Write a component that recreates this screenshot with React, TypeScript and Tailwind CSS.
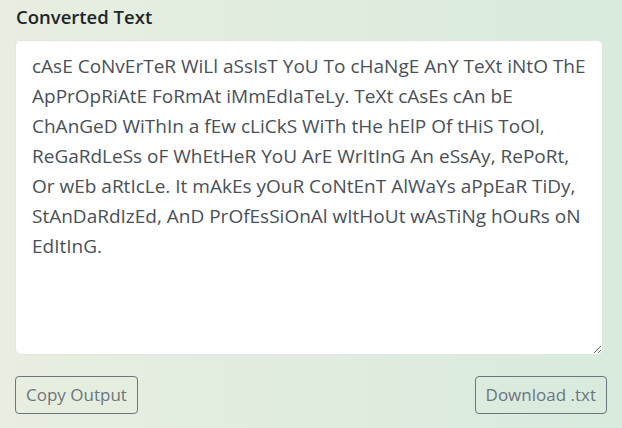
const output =
  'cAsE CoNvErTeR WiLl aSsIsT YoU To cHaNgE AnY TeXt iNtO ThE ApPrOpRiAtE FoRmAt iMmEdIaTeLy. TeXt cAsEs cAn bE ChAnGeD WiThIn a fEw cLiCkS WiTh tHe hElP Of tHiS ToOl, ReGaRdLeSs oF WhEtHeR YoU ArE WrItInG An eSsAy, RePoRt, Or wEb aRtIcLe. It mAkEs yOuR CoNtEnT AlWaYs aPpEaR TiDy, StAnDaRdIzEd, AnD PrOfEsSiOnAl wItHoUt wAsTiNg hOuRs oN EdItInG.';

export default function App() {
  return (
    <div className="w-[622px] h-[428px] bg-gradient-to-r from-[#e8eee0] to-[#d8ebdd] px-[15px] pt-[4px] font-['Open_Sans',sans-serif]">
      <h2 className="text-[18.5px] font-semibold text-[#212529] leading-[26px] pl-px">Converted Text</h2>

      <textarea
        readOnly
        value={output}
        className="mt-[10px] block w-[588px] h-[315px] rounded-md border border-[#e3e7e1] bg-white pl-4 pr-[12px] pt-[10px] text-[19px] leading-[30px] text-[#495057] outline-none"
      />

      <div className="mt-[21px] flex justify-between">
        <button className="h-[38px] px-[10px] rounded border border-[#6c757d] text-[17px] text-[#6c757d]">
          Copy Output
        </button>
        <button className="h-[38px] px-[10px] rounded border border-[#6c757d] text-[17px] text-[#6c757d]">
          Download .txt
        </button>
      </div>
    </div>
  );
}
